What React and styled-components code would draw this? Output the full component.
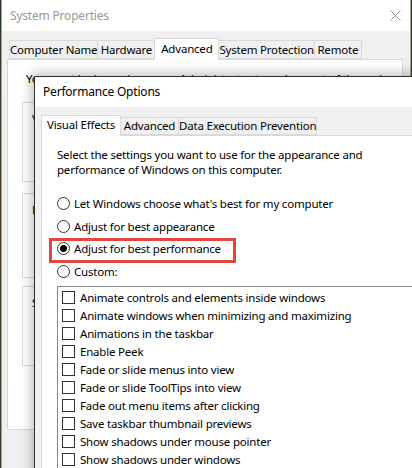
import React from "react";
import styled, { createGlobalStyle } from "styled-components";

const Global = createGlobalStyle`
  html, body { margin: 0; padding: 0; width: 412px; height: 468px; overflow: hidden; }
  body {
    background: #3b3a2b;
    font-family: "Noto Sans", "Segoe UI", sans-serif;
    font-size: 11.5px;
    letter-spacing: -0.2px;
    color: #000;
  }
  *, *::before, *::after { box-sizing: border-box; }
`;

const Desktop = styled.div`
  position: relative;
  width: 412px;
  height: 468px;
  overflow: hidden;
  padding-left: 1px;
  background: linear-gradient(180deg, #2e3a2c 0%, #4a3a27 45%, #3b3f2d 100%);
`;

const SysWindow = styled.div`
  width: 410px;
  height: 480px;
  background: #f0f0f0;
  border: 1px solid #a0a0a0;
  border-top: none;
  display: flex;
  flex-direction: column;
`;

const TitleBar = styled.div`
  flex: 0 0 ${(p) => p.$h}px;
  display: flex;
  align-items: center;
  justify-content: space-between;
  padding: 0 9px 0 ${(p) => p.$pl}px;
  background: #fff;
  color: ${(p) => (p.$active ? "#000" : "#999")};
  font-size: 12px;
  line-height: 16px;
  white-space: nowrap;
`;

const CloseIcon = styled.svg`
  width: 11px;
  height: 11px;
  flex: none;
`;

const SysBody = styled.div`
  flex: 1;
  display: flex;
  flex-direction: column;
  padding: 7px 7px 0 5px;
`;

const TabStrip = styled.div`
  display: flex;
  align-items: flex-end;
  padding-left: ${(p) => p.$pl}px;
  margin-bottom: -1px;
  position: relative;
  z-index: 1;
`;

const Tab = styled.div`
  flex: 0 0 ${(p) => p.$w}px;
  height: ${(p) => (p.$sel ? p.$h + 3 : p.$h)}px;
  margin-left: ${(p) => (p.$first ? 0 : -1)}px;
  margin-bottom: ${(p) => (p.$sel ? 0 : 1)}px;
  display: flex;
  align-items: center;
  justify-content: center;
  padding-bottom: ${(p) => (p.$sel ? 2 : 0)}px;
  background: ${(p) => (p.$sel ? "#fff" : "#f0f0f0")};
  border: 1px solid #d9d9d9;
  border-bottom: ${(p) => (p.$sel ? "none" : "1px solid #d9d9d9")};
  position: relative;
  z-index: ${(p) => (p.$sel ? 2 : 1)};
  white-space: nowrap;
  line-height: 16px;
`;

const SysPanel = styled.div`
  flex: 0 0 371px;
  background: #fff;
  border: 1px solid #d9d9d9;
  padding: 11px 0 0 14px;
  display: flex;
  flex-direction: column;
  overflow: hidden;
`;

const IntroText = styled.div`
  line-height: 16px;
  padding-left: 4px;
  white-space: nowrap;
  margin-bottom: 7px;
`;

const Group = styled.fieldset`
  margin: ${(p) => p.$mt}px 0 0 0;
  height: ${(p) => p.$h}px;
  width: 372px;
  padding: 0 9px;
  border: 1px solid #dcdcdc;
  min-width: 0;
`;

const GroupLegend = styled.legend`
  padding: 0 2px;
  margin-left: 6px;
  line-height: 16px;
  white-space: nowrap;
`;

const GroupText = styled.div`
  margin-top: 1px;
  line-height: 16px;
  white-space: nowrap;
`;

const PerfWindow = styled.div`
  position: absolute;
  left: 34px;
  top: 76px;
  width: 420px;
  height: 420px;
  background: #f0f0f0;
  border: 1px solid #2e2e2e;
  box-shadow: 0 0 12px 2px rgba(0, 0, 0, 0.28);
  display: flex;
  flex-direction: column;
  z-index: 5;
`;

const PerfBody = styled.div`
  flex: 1;
  display: flex;
  flex-direction: column;
  padding: 8px 0 0 6px;
`;

const PerfPanel = styled.div`
  flex: 1;
  background: #fff;
  border: 1px solid #d9d9d9;
  border-right: none;
  padding: 11px 0 0 15px;
  display: flex;
  flex-direction: column;
`;

const Para = styled.p`
  margin: 0 0 15.5px 0;
  line-height: 15px;
  white-space: nowrap;
`;

const RadioRow = styled.label`
  height: 22.5px;
  display: flex;
  align-items: center;
  gap: 4px;
  position: relative;
  white-space: nowrap;

  ${(p) =>
    p.$highlight &&
    `
    &::after {
      content: "";
      position: absolute;
      left: -8px;
      top: 0;
      width: 187px;
      height: 25px;
      border: 3px solid #e2463e;
      pointer-events: none;
    }
  `}
`;

const RadioCircle = styled.span`
  width: 13px;
  height: 13px;
  border: 1px solid #333;
  border-radius: 50%;
  background: #fff;
  display: flex;
  align-items: center;
  justify-content: center;
  flex: none;

  &::before {
    content: "";
    width: 7px;
    height: 7px;
    border-radius: 50%;
    background: ${(p) => (p.$on ? "#000" : "transparent")};
  }
`;

const ListBox = styled.div`
  margin-top: 3.5px;
  flex: 1;
  border: 1px solid #828790;
  border-right: none;
  border-bottom: none;
  padding: 1px 0 0 4px;
  background: #fff;
  overflow: hidden;
`;

const CheckRow = styled.div`
  height: 18px;
  display: flex;
  align-items: center;
  gap: 5px;
  white-space: nowrap;
`;

const CheckBox = styled.span`
  width: 13px;
  height: 13px;
  border: 1px solid #333;
  background: #fff;
  flex: none;
`;

const sysTabs = [
  { t: "Computer Name", w: 88 },
  { t: "Hardware", w: 58 },
  { t: "Advanced", w: 65, sel: true },
  { t: "System Protection", w: 96 },
  { t: "Remote", w: 48 },
];

const perfTabs = [
  { t: "Visual Effects", w: 80, sel: true },
  { t: "Advanced", w: 59 },
  { t: "Data Execution Prevention", w: 139 },
];

const radios = [
  { t: "Let Windows choose what's best for my computer" },
  { t: "Adjust for best appearance" },
  { t: "Adjust for best performance", on: true, hl: true },
  { t: "Custom:" },
];

const effects = [
  "Animate controls and elements inside windows",
  "Animate windows when minimizing and maximizing",
  "Animations in the taskbar",
  "Enable Peek",
  "Fade or slide menus into view",
  "Fade or slide ToolTips into view",
  "Fade out menu items after clicking",
  "Save taskbar thumbnail previews",
  "Show shadows under mouse pointer",
  "Show shadows under windows",
];

export default function App() {
  return (
    <>
      <Global />
      <Desktop>
        <SysWindow>
          <TitleBar $h={31} $pl={8}>
            <span>System Properties</span>
            <CloseIcon viewBox="0 0 11 11">
              <path d="M0.5 0.5 L10.5 10.5 M10.5 0.5 L0.5 10.5" stroke="#9a9a9a" strokeWidth="1" fill="none" />
            </CloseIcon>
          </TitleBar>
          <SysBody>
            <TabStrip $pl={2}>
              {sysTabs.map((tb, i) => (
                <Tab key={tb.t} $w={tb.w} $h={19} $sel={tb.sel} $first={i === 0}>
                  {tb.t}
                </Tab>
              ))}
            </TabStrip>
            <SysPanel>
              <IntroText>You must be logged on as an Administrator to make most of these changes.</IntroText>
              <Group $mt={0} $h={88}>
                <GroupLegend>Performance</GroupLegend>
                <GroupText>Visual effects, processor scheduling, memory usage, and virtual memory</GroupText>
              </Group>
              <Group $mt={3} $h={93}>
                <GroupLegend>User Profiles</GroupLegend>
                <GroupText>Desktop settings related to your sign-in</GroupText>
              </Group>
              <Group $mt={0} $h={88}>
                <GroupLegend>Startup and Recovery</GroupLegend>
                <GroupText>System startup, system failure, and debugging information</GroupText>
              </Group>
            </SysPanel>
          </SysBody>
        </SysWindow>

        <PerfWindow>
          <TitleBar $h={30} $pl={8} $active>
            <span>Performance Options</span>
          </TitleBar>
          <PerfBody>
            <TabStrip $pl={0}>
              {perfTabs.map((tb, i) => (
                <Tab key={tb.t} $w={tb.w} $h={18} $sel={tb.sel} $first={i === 0}>
                  {tb.t}
                </Tab>
              ))}
            </TabStrip>
            <PerfPanel>
              <Para>
                Select the settings you want to use for the appearance and
                <br />
                performance of Windows on this computer.
              </Para>
              {radios.map((r) => (
                <RadioRow key={r.t} $highlight={r.hl}>
                  <RadioCircle $on={r.on} />
                  <span>{r.t}</span>
                </RadioRow>
              ))}
              <ListBox>
                {effects.map((e) => (
                  <CheckRow key={e}>
                    <CheckBox />
                    <span>{e}</span>
                  </CheckRow>
                ))}
              </ListBox>
            </PerfPanel>
          </PerfBody>
        </PerfWindow>
      </Desktop>
    </>
  );
}
